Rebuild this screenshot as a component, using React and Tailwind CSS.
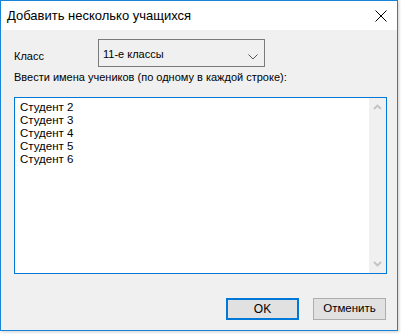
import { useState } from "react";

export default function App() {
  const [names, setNames] = useState("Студент 2\nСтудент 3\nСтудент 4\nСтудент 5\nСтудент 6");

  return (
    <div className="w-[401px] h-[334px] bg-white" style={{ fontFamily: '"Liberation Sans", Arial, sans-serif' }}>
      <div className="w-[398px] h-[331px] flex flex-col border border-[#1883d7] bg-[#f0f0f0] text-[11px] text-black shadow-[1px_1px_3px_rgba(0,0,0,0.2)]">
        <div className="h-[29px] bg-white flex items-center justify-between pl-[6px] pr-[9px] shrink-0">
          <span className="text-[13px] pt-[1px]">Добавить несколько учащихся</span>
          <svg width="12" height="12" viewBox="0 0 12 12" className="mr-[1px]">
            <path d="M0.5 0.5 L11.5 11.5 M11.5 0.5 L0.5 11.5" stroke="#000" strokeWidth="1" />
          </svg>
        </div>

        <div className="flex-1 flex flex-col pl-[13px] pr-[10px]">
          <div className="flex items-start mt-[9px]">
            <span className="w-[84px] pt-[10px] leading-[14px]">Класс</span>
            <div className="w-[167px] h-[28px] border border-[#7a7a7a] bg-[#f0f0f0] flex items-start justify-between pl-[4px] pr-[6px]">
              <span className="pt-[7px] leading-[14px]">11-е классы</span>
              <svg width="10" height="6" viewBox="0 0 10 6" className="mt-[14px]">
                <path d="M0.5 0.5 L5 5 L9.5 0.5" stroke="#555" strokeWidth="1" fill="none" />
              </svg>
            </div>
          </div>

          <div className="mt-[3px] leading-[14px]">Ввести имена учеников (по одному в каждой строке):</div>

          <div className="mt-[13px] w-[373px] h-[177px] border border-[#0078d7] bg-white flex">
            <textarea
              value={names}
              onChange={(e) => setNames(e.target.value)}
              className="flex-1 resize-none outline-none pl-[5px] pt-[3px] text-[11.5px] leading-[13px] overflow-hidden"
              style={{ fontFamily: '"Liberation Sans", Arial, sans-serif' }}
            />
            <div className="w-[17px] bg-[#f0f0f0] flex flex-col items-center justify-between py-[6px]">
              <svg width="9" height="6" viewBox="0 0 9 6">
                <path d="M1 5 L4.5 1.5 L8 5" stroke="#c2c2c2" strokeWidth="1.8" fill="none" />
              </svg>
              <svg width="9" height="6" viewBox="0 0 9 6">
                <path d="M1 1 L4.5 4.5 L8 1" stroke="#c2c2c2" strokeWidth="1.8" fill="none" />
              </svg>
            </div>
          </div>

          <div className="flex justify-end gap-[14px] mt-[24px] pr-[1px]">
            <button className="w-[73px] h-[22px] border-2 border-[#0078d7] bg-[#e1e1e1] text-[12px] leading-none">OK</button>
            <button className="w-[73px] h-[22px] border border-[#adadad] bg-[#e1e1e1] text-[11.5px] leading-none">Отменить</button>
          </div>
        </div>
      </div>
    </div>
  );
}
